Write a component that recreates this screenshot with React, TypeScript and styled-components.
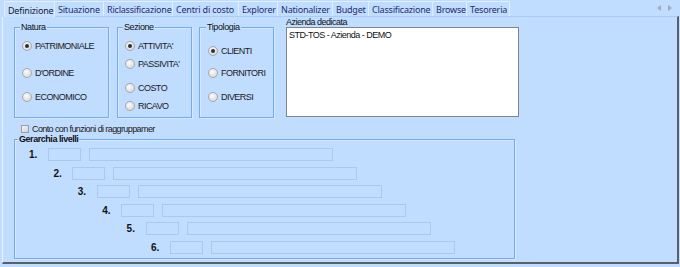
import styled, { createGlobalStyle } from 'styled-components';

const GlobalStyle = createGlobalStyle`
  html, body {
    margin: 0;
    padding: 0;
    background: #c0dcfe;
  }
  * {
    box-sizing: border-box;
  }
`;

const Window = styled.div`
  width: 680px;
  height: 267px;
  background: #c0dcfe;
  font-family: 'Liberation Sans', Arial, sans-serif;
  color: #111;
  overflow: hidden;
`;

const TabBar = styled.div`
  display: flex;
  align-items: flex-end;
  height: 16px;
  padding-left: 4px;
`;

const Tab = styled.div<{ $active?: boolean; $w: number }>`
  width: ${({ $w }) => $w}px;
  height: ${({ $active }) => ($active ? '16px' : '15px')};
  padding: 1px 0 0 3px;
  display: flex;
  align-items: center;
  font-family: 'Noto Sans', 'Open Sans', sans-serif;
  font-size: 9px;
  letter-spacing: -0.2px;
  color: ${({ $active }) => ($active ? '#111a3a' : '#1f2d6e')};
  border: 1px solid #e2eefd;
  border-bottom: none;
  border-left-width: ${({ $active }) => ($active ? '1px' : '0')};
  background: ${({ $active }) => ($active ? '#c6e0fe' : 'transparent')};
  white-space: nowrap;
  overflow: hidden;
  position: relative;
  z-index: ${({ $active }) => ($active ? 1 : 0)};
  margin-bottom: ${({ $active }) => ($active ? '-1px' : '0')};
`;

const Scroller = styled.div`
  margin-left: auto;
  margin-right: 8px;
  align-self: center;
  display: flex;
  gap: 7px;
`;

const Panel = styled.div`
  margin: 0 1px 0 2px;
  height: 248px;
  border-top: 1px solid #a9cbf5;
  border-left: 1px solid #e8f2ff;
  border-right: 2px solid #5b5f66;
  border-bottom: 2px solid #5b5f66;
  padding: 0 0 0 11px;
`;

const TopRow = styled.div`
  display: flex;
  align-items: flex-start;
  margin-top: 10px;
`;

const GroupBox = styled.div<{ $w: number; $h: number; $ml?: number; $pl?: number }>`
  display: flex;
  flex-direction: column;
  margin-left: ${({ $ml }) => $ml ?? 0}px;
  padding-left: ${({ $pl }) => $pl ?? 7}px;
  width: ${({ $w }) => $w}px;
  height: ${({ $h }) => $h}px;
  border: 1px solid #74aaf0;
  box-shadow: inset 1px 1px 0 #d6e8ff, 1px 1px 0 #d6e8ff;
`;

const Caption = styled.div<{ $bold?: boolean }>`
  align-self: flex-start;
  margin: -6px 0 0 ${({ $bold }) => ($bold ? '3px' : '-2px')};
  padding: 0 1px;
  height: 10px;
  line-height: 10px;
  font-size: 9px;
  letter-spacing: ${({ $bold }) => ($bold ? '-0.45px' : '-0.4px')};
  font-weight: ${({ $bold }) => ($bold ? 700 : 400)};
  background: #c0dcfe;
  color: #111;
  white-space: nowrap;
`;

const Option = styled.label<{ $mt: number }>`
  display: flex;
  align-items: center;
  gap: 3px;
  height: 12px;
  margin-top: ${({ $mt }) => $mt}px;
  font-size: 9px;
  letter-spacing: -0.55px;
  color: #1a1a1a;
`;

const Radio = styled.span<{ $on?: boolean }>`
  width: 10px;
  height: 10px;
  border-radius: 50%;
  border: 1px solid #a3a7ad;
  background: radial-gradient(circle at 40% 35%, #fbfbfb 0%, #e2e2e2 60%, #cfd2d6 100%);
  display: flex;
  align-items: center;
  justify-content: center;
  flex: none;
  &::after {
    content: '';
    width: 4px;
    height: 4px;
    border-radius: 50%;
    background: ${({ $on }) => ($on ? '#2b2f36' : 'transparent')};
  }
`;

const ListColumn = styled.div`
  margin-left: 12px;
  margin-top: -9px;
  display: flex;
  flex-direction: column;
`;

const ListLabel = styled.div`
  height: 9px;
  line-height: 9px;
  font-size: 9px;
  letter-spacing: -0.5px;
  color: #111;
`;

const ListBox = styled.div`
  width: 233px;
  height: 90px;
  background: #fff;
  border: 1px solid #7e8590;
  padding: 2px 2px;
  font-size: 9px;
  letter-spacing: -0.5px;
  line-height: 10px;
  color: #111;
`;

const CheckRow = styled.label`
  display: flex;
  align-items: center;
  gap: 3px;
  height: 9px;
  margin: 6px 0 0 7px;
  font-size: 9px;
  letter-spacing: -0.6px;
  color: #1a1a1a;
`;

const Check = styled.span`
  width: 8px;
  height: 8px;
  border: 1px solid #9a9ea4;
  background: linear-gradient(135deg, #f4f4f4, #d4d6da);
`;

const Levels = styled(GroupBox)`
  margin-top: 6px;
  padding-left: 0;
`;

const LevelRow = styled.div<{ $level: number }>`
  display: flex;
  align-items: center;
  height: 13px;
  margin-top: ${({ $level }) => ($level === 0 ? 4 : 5.6)}px;
  padding-left: ${({ $level }) => 14 + $level * 24.4}px;
`;

const LevelNum = styled.span`
  width: 19px;
  font-size: 10px;
  font-weight: 700;
  color: #111;
`;

const Field = styled.span<{ $w: number }>`
  width: ${({ $w }) => $w}px;
  height: 13px;
  margin-right: 8px;
  border: 1px solid #afc8ea;
  background: #c0dcfe;
`;

const tabs = [
  { label: 'Definizione', w: 51 },
  { label: 'Situazione', w: 49 },
  { label: 'Riclassificazione', w: 69 },
  { label: 'Centri di costo', w: 66 },
  { label: 'Explorer', w: 39 },
  { label: 'Nationalizer', w: 55 },
  { label: 'Budget', w: 36 },
  { label: 'Classificazione', w: 64 },
  { label: 'Browse', w: 34 },
  { label: 'Tesoreria', w: 43 },
];

const natura = [
  { label: 'PATRIMONIALE', mt: 8, on: true },
  { label: "D'ORDINE", mt: 15 },
  { label: 'ECONOMICO', mt: 12 },
];

const sezione = [
  { label: "ATTIVITA'", mt: 8, on: true },
  { label: "PASSIVITA'", mt: 6 },
  { label: 'COSTO', mt: 12 },
  { label: 'RICAVO', mt: 6 },
];

const tipologia = [
  { label: 'CLIENTI', mt: 13, on: true },
  { label: 'FORNITORI', mt: 10 },
  { label: 'DIVERSI', mt: 12 },
];

type Opt = { label: string; mt: number; on?: boolean };

const Options = ({ items }: { items: Opt[] }) => (
  <>
    {items.map((o) => (
      <Option key={o.label} $mt={o.mt}>
        <Radio $on={o.on} />
        {o.label}
      </Option>
    ))}
  </>
);

const Arrow = ({ dir }: { dir: 'left' | 'right' }) => (
  <svg width="4" height="6" viewBox="0 0 4 6">
    <path d={dir === 'left' ? 'M4 0 L0 3 L4 6 Z' : 'M0 0 L4 3 L0 6 Z'} fill="#a4acba" />
  </svg>
);

export default function App() {
  return (
    <Window>
      <GlobalStyle />
      <TabBar>
        {tabs.map((t, i) => (
          <Tab key={t.label} $w={t.w} $active={i === 0}>
            {t.label}
          </Tab>
        ))}
        <Scroller>
          <Arrow dir="left" />
          <Arrow dir="right" />
        </Scroller>
      </TabBar>
      <Panel>
        <TopRow>
          <GroupBox $w={95} $h={91}>
            <Caption>Natura</Caption>
            <Options items={natura} />
          </GroupBox>
          <GroupBox $w={75} $h={91} $ml={8}>
            <Caption>Sezione</Caption>
            <Options items={sezione} />
          </GroupBox>
          <GroupBox $w={75} $h={91} $ml={7} $pl={8}>
            <Caption>Tipologia</Caption>
            <Options items={tipologia} />
          </GroupBox>
          <ListColumn>
            <ListLabel>Azienda dedicata</ListLabel>
            <ListBox>STD-TOS - Azienda - DEMO</ListBox>
          </ListColumn>
        </TopRow>
        <CheckRow>
          <Check />
          Conto con funzioni di raggruppamer
        </CheckRow>
        <Levels $w={501} $h={120}>
          <Caption $bold>Gerarchia livelli</Caption>
          {[1, 2, 3, 4, 5, 6].map((n, i) => (
            <LevelRow key={n} $level={i}>
              <LevelNum>{n}.</LevelNum>
              <Field $w={33} />
              <Field $w={244} />
            </LevelRow>
          ))}
        </Levels>
      </Panel>
    </Window>
  );
}
